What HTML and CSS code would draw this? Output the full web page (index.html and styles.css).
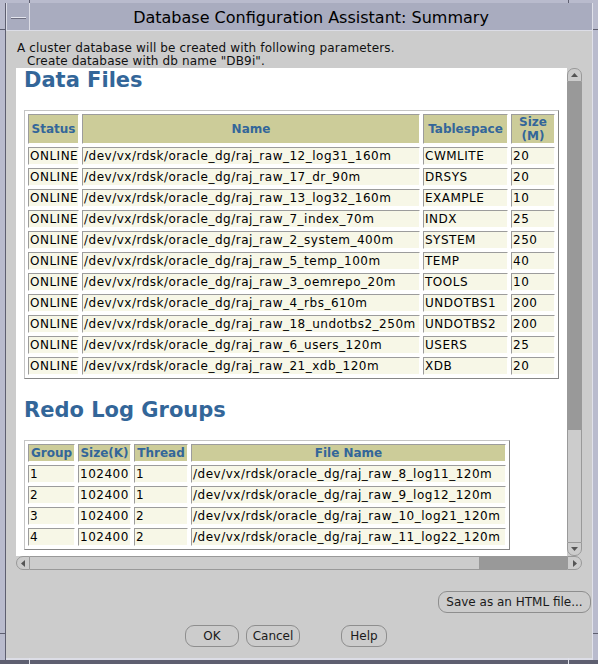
FILE: index.html
```html
<!DOCTYPE html>
<html lang="en">
<head>
    <meta charset="UTF-8">
    <title>Database Configuration Assistant: Summary</title>
    <link rel="stylesheet" href="styles.css">
</head>
<body>
    <div class="window">
        <!-- marcas de redimensionado del marco -->
        <span class="tick tick-tl"></span>
        <span class="tick tick-tr"></span>
        <span class="tick tick-lt"></span>
        <span class="tick tick-rt"></span>
        <span class="tick tick-lb"></span>
        <span class="tick tick-rb"></span>
        <span class="tick tick-bl"></span>
        <span class="tick tick-br"></span>

        <div class="inner">
            <div class="titlebar">
                <div class="menu-btn"><span class="dash"></span></div>
                <div class="title">Database Configuration Assistant: Summary</div>
            </div>

            <div class="client">
                <p class="intro first">A cluster database will be created with following parameters.</p>
                <p class="intro sub">Create database with db name "DB9i".</p>

                <div class="scrollpane">
                    <div class="viewport">
                        <h2>Data Files</h2>
                        <table class="grid files">
                            <tr>
                                <th class="c-status">Status</th>
                                <th class="c-name">Name</th>
                                <th class="c-ts">Tablespace</th>
                                <th class="c-size">Size (M)</th>
                            </tr>
                            <tr><td>ONLINE</td><td>/dev/vx/rdsk/oracle_dg/raj_raw_12_log31_160m</td><td>CWMLITE</td><td>20</td></tr>
                            <tr><td>ONLINE</td><td>/dev/vx/rdsk/oracle_dg/raj_raw_17_dr_90m</td><td>DRSYS</td><td>20</td></tr>
                            <tr><td>ONLINE</td><td>/dev/vx/rdsk/oracle_dg/raj_raw_13_log32_160m</td><td>EXAMPLE</td><td>10</td></tr>
                            <tr><td>ONLINE</td><td>/dev/vx/rdsk/oracle_dg/raj_raw_7_index_70m</td><td>INDX</td><td>25</td></tr>
                            <tr><td>ONLINE</td><td>/dev/vx/rdsk/oracle_dg/raj_raw_2_system_400m</td><td>SYSTEM</td><td>250</td></tr>
                            <tr><td>ONLINE</td><td>/dev/vx/rdsk/oracle_dg/raj_raw_5_temp_100m</td><td>TEMP</td><td>40</td></tr>
                            <tr><td>ONLINE</td><td>/dev/vx/rdsk/oracle_dg/raj_raw_3_oemrepo_20m</td><td>TOOLS</td><td>10</td></tr>
                            <tr><td>ONLINE</td><td>/dev/vx/rdsk/oracle_dg/raj_raw_4_rbs_610m</td><td>UNDOTBS1</td><td>200</td></tr>
                            <tr><td>ONLINE</td><td>/dev/vx/rdsk/oracle_dg/raj_raw_18_undotbs2_250m</td><td>UNDOTBS2</td><td>200</td></tr>
                            <tr><td>ONLINE</td><td>/dev/vx/rdsk/oracle_dg/raj_raw_6_users_120m</td><td>USERS</td><td>25</td></tr>
                            <tr><td>ONLINE</td><td>/dev/vx/rdsk/oracle_dg/raj_raw_21_xdb_120m</td><td>XDB</td><td>20</td></tr>
                        </table>

                        <h2 class="redo">Redo Log Groups</h2>
                        <table class="grid logs">
                            <tr>
                                <th class="c-group">Group</th>
                                <th class="c-sizek">Size(K)</th>
                                <th class="c-thread">Thread</th>
                                <th class="c-file">File Name</th>
                            </tr>
                            <tr><td>1</td><td>102400</td><td>1</td><td>/dev/vx/rdsk/oracle_dg/raj_raw_8_log11_120m</td></tr>
                            <tr><td>2</td><td>102400</td><td>1</td><td>/dev/vx/rdsk/oracle_dg/raj_raw_9_log12_120m</td></tr>
                            <tr><td>3</td><td>102400</td><td>2</td><td>/dev/vx/rdsk/oracle_dg/raj_raw_10_log21_120m</td></tr>
                            <tr><td>4</td><td>102400</td><td>2</td><td>/dev/vx/rdsk/oracle_dg/raj_raw_11_log22_120m</td></tr>
                        </table>
                    </div>

                    <div class="vscroll">
                        <div class="arrow up"><svg width="7" height="4" viewBox="0 0 7 4"><polygon points="0,4 3.5,0 7,4" fill="#555"/></svg></div>
                        <div class="thumb"></div>
                        <div class="track"></div>
                        <div class="arrow down"><svg width="7" height="4" viewBox="0 0 7 4"><polygon points="0,0 7,0 3.5,4" fill="#555"/></svg></div>
                    </div>

                    <div class="hscroll">
                        <div class="arrow left"><svg width="4" height="7" viewBox="0 0 4 7"><polygon points="4,0 4,7 0,3.5" fill="#555"/></svg></div>
                        <div class="track"></div>
                        <div class="thumb"></div>
                        <div class="arrow right"><svg width="4" height="7" viewBox="0 0 4 7"><polygon points="0,0 4,3.5 0,7" fill="#555"/></svg></div>
                    </div>
                </div>

                <div class="save-row">
                    <button class="btn btn-save">Save as an HTML file...</button>
                </div>
                <div class="button-row">
                    <button class="btn btn-ok">OK</button>
                    <button class="btn btn-cancel">Cancel</button>
                    <button class="btn btn-help">Help</button>
                </div>
            </div>
        </div>
    </div>
</body>
</html>
```

FILE: styles.css
```css
body {
    margin: 0;
    background-color: #cccccc;
    font-family: "DejaVu Sans", sans-serif;
    color: #111111;
}

/* marco de la ventana */
.window {
    position: relative;
    width: 598px;
    height: 664px;
    box-sizing: border-box;
    padding: 3px 5px 0 5px;
    background-color: #b9bbcd;
    border-bottom: 4px solid #5e5f70;
    display: flex;
    flex-direction: column;
}
.inner {
    flex: 1;
    display: flex;
    flex-direction: column;
    border-left: 1px solid #5e5f70;
    border-right: 1px solid #e0e1ea;
}
.tick {
    position: absolute;
    background-color: #5e5f70;
}
.tick-tl { left: 29px; top: 0; width: 1px; height: 3px; }
.tick-tr { left: 568px; top: 0; width: 1px; height: 3px; }
.tick-lt { left: 0; top: 29px; width: 5px; height: 1px; }
.tick-rt { right: 0; top: 29px; width: 5px; height: 1px; }
.tick-lb { left: 0; top: 633px; width: 5px; height: 1px; }
.tick-rb { right: 0; top: 633px; width: 5px; height: 1px; }
.tick-bl { left: 29px; bottom: -4px; width: 1px; height: 6px; background-color: #e0e1ea; }
.tick-br { left: 568px; bottom: -4px; width: 1px; height: 6px; background-color: #e0e1ea; }

.titlebar {
    height: 27px;
    display: flex;
    background-color: #a9acbf;
    border-bottom: 1px solid #dcdde6;
}
.menu-btn {
    width: 22px;
    border-left: 1px solid #dcdde6;
    border-right: 1px solid #dcdde6;
}
.menu-btn .dash {
    display: block;
    margin: 14px 0 0 4px;
    width: 15px;
    height: 1px;
    background-color: #e6e7ef;
    border-bottom: 1px solid #6d6e80;
}
.title {
    flex: 1;
    text-align: center;
    font-size: 16px;
    line-height: 24px;
    padding-top: 3px;
    color: #000000;
}

.client {
    flex: 1;
    background-color: #cccccc;
    border-bottom: 2px solid #dcdde6;
    display: flex;
    flex-direction: column;
}
.intro {
    margin: 0;
    font-size: 12px;
    letter-spacing: 0.15px;
    line-height: 14px;
    padding-left: 11px;
}
.intro.first {
    padding-top: 10px;
}
.intro.sub {
    padding-left: 21px;
    line-height: 13px;
}

/* panel con barras de desplazamiento */
.scrollpane {
    display: grid;
    grid-template-columns: 551px 15px;
    grid-template-rows: 488px 14px;
    margin-left: 10px;
}
.viewport {
    background-color: #ffffff;
    overflow: hidden;
    padding-left: 8px;
}
.viewport h2 {
    margin: 0;
    font-size: 21px;
    line-height: 24px;
    font-weight: bold;
    color: #336699;
}
.viewport h2.redo {
    margin-top: 19px;
}

.grid {
    border-collapse: separate;
    border-spacing: 3px;
    border: 1px solid;
    border-color: #c4c4c4 #868686 #868686 #c4c4c4;
    table-layout: fixed;
    margin-top: 18px;
}
.grid th,
.grid td {
    box-sizing: border-box;
    border: 1px solid;
    border-color: #9c9c9c #ffffff #ffffff #9c9c9c;
    padding: 0 1px;
    white-space: nowrap;
    overflow: hidden;
}
.grid th {
    background-color: #cccc99;
    color: #336699;
    font-size: 12px;
    font-weight: bold;
    line-height: 14px;
    text-align: center;
    vertical-align: middle;
}
.grid td {
    height: 18px;
    background-color: #f7f7e7;
    font-size: 12px;
    letter-spacing: 0.5px;
    line-height: 16px;
    color: #000000;
    vertical-align: middle;
}
.files {
    width: 535px;
}
.files th {
    height: 30px;
    white-space: normal;
}
.c-status { width: 51px; }
.c-name { width: 338px; }
.c-ts { width: 85px; }
.c-size { width: 44px; }

.logs {
    width: 486px;
}
.logs th {
    height: 18px;
    line-height: 16px;
}
.c-group { width: 47px; }
.c-sizek { width: 53px; }
.c-thread { width: 54px; }
.c-file { width: 315px; }

.arrow {
    box-sizing: border-box;
    border: 1px solid #999999;
    background-color: #cccccc;
    display: flex;
    align-items: center;
    justify-content: center;
}
.arrow svg {
    display: block;
}
.vscroll {
    display: flex;
    flex-direction: column;
}
.vscroll .arrow {
    height: 14px;
}
.arrow.up {
    border-radius: 7px 7px 0 0;
}
.arrow.down {
    border-radius: 0 0 7px 7px;
}
.vscroll .thumb {
    height: 348px;
    background-color: #999999;
}
.vscroll .track {
    flex: 1;
    background-color: #cccccc;
    border-left: 1px solid #999999;
    border-right: 1px solid #999999;
}
.hscroll {
    grid-column: 1 / 3;
    display: flex;
}
.hscroll .arrow {
    width: 14px;
}
.arrow.left {
    border-radius: 7px 0 0 7px;
}
.arrow.right {
    width: 15px;
    border-radius: 0 7px 7px 0;
}
.hscroll .track {
    flex: 1;
    background-color: #cccccc;
    border-top: 1px solid #999999;
    border-bottom: 1px solid #999999;
}
.hscroll .thumb {
    width: 88px;
    background-color: #999999;
}

/* botones */
.btn {
    height: 22px;
    padding: 0;
    border: 1px solid #8e8e8e;
    border-radius: 9px;
    background-color: #cccccc;
    font-family: "DejaVu Sans", sans-serif;
    font-size: 12px;
    color: #1a1a1a;
}
.save-row {
    display: flex;
    justify-content: flex-end;
    margin-top: 21px;
    padding-right: 1px;
}
.btn-save { width: 153px; }
.button-row {
    display: flex;
    margin-top: 12px;
    padding-left: 179px;
}
.btn-ok { width: 54px; }
.btn-cancel { width: 54px; margin-left: 7px; }
.btn-help { width: 46px; margin-left: 41px; }
```
